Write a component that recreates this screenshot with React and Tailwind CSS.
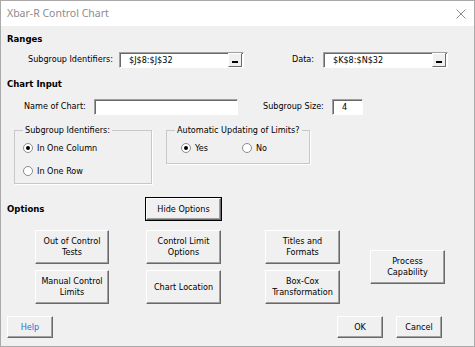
import React, { useState } from 'react';

const font = { fontFamily: '"DejaVu Sans Condensed", "DejaVu Sans", sans-serif', fontStretch: 'condensed' };

function Btn({ children, className = '', focused = false }) {
  return (
    <button
      type="button"
      className={
        'flex items-center justify-center text-center whitespace-nowrap leading-[11px] text-[9px] text-black bg-[#f0f0f0] border border-t-white border-l-white border-r-[#696969] border-b-[#696969] shadow-[inset_-1px_-1px_0_#a0a0a0] ' +
        (focused ? 'outline outline-1 outline-black ' : '') +
        className
      }
    >
      {children}
    </button>
  );
}

function Field({ value = '', className = '', refEdit = false }) {
  return (
    <div className={'flex items-center bg-white border border-t-[#a0a0a0] border-l-[#a0a0a0] border-r-white border-b-white shadow-[inset_1px_1px_0_#696969] ' + className}>
      <span className="flex-1 pl-[9px] text-[9px] leading-[12px] text-black whitespace-nowrap">{value}</span>
      {refEdit && (
        <span className="w-[14px] h-[14px] mr-[1px] flex items-end justify-center pb-[3px] bg-[#f0f0f0] border border-t-white border-l-white border-r-[#696969] border-b-[#696969]">
          <span className="block w-[6px] h-[2px] bg-black" />
        </span>
      )}
    </div>
  );
}

function Radio({ checked, label, onClick }) {
  return (
    <div className="flex items-center h-[14px] cursor-default whitespace-nowrap" onClick={onClick}>
      <svg width="10" height="10" viewBox="0 0 10 10">
        <circle cx="5" cy="5" r="4.5" fill="#fff" stroke="#8a8a8a" />
        {checked && <circle cx="5" cy="5" r="2" fill="#000" />}
      </svg>
      <span className="ml-[4px] text-[9px] leading-[12px]">{label}</span>
    </div>
  );
}

export default function App() {
  const [ident, setIdent] = useState('col');
  const [auto, setAuto] = useState('yes');

  return (
    <div style={font} className="w-[475px] h-[347px] flex flex-col bg-[#f0f0f0] border border-[#aaaaaa] text-black text-[9px] overflow-hidden">
      <div className="h-[25px] bg-white flex items-center justify-between pl-[6px] pr-[8px] shrink-0">
        <span style={{ fontFamily: '"Noto Sans", sans-serif', fontStretch: 'normal' }} className="text-[10.5px] text-[#8c8c8c]">Xbar-R Control Chart</span>
        <svg width="10" height="10" viewBox="0 0 10 10">
          <path d="M0.5 0.5L9.5 9.5M9.5 0.5L0.5 9.5" stroke="#8c8c8c" strokeWidth="1" />
        </svg>
      </div>

      <div className="flex flex-col pl-[6px]">
        <div className="mt-[6px] h-[14px] text-[9.5px] font-bold leading-[14px]">Ranges</div>

        <div className="mt-[6px] flex items-center h-[16px]">
          <span className="ml-[21px] w-[91px] whitespace-nowrap">Subgroup Identifiers:</span>
          <Field value="$J$8:$J$32" refEdit className="w-[125px] h-[16px]" />
          <span className="ml-[48px] w-[31px]">Data:</span>
          <Field value="$K$8:$N$32" refEdit className="w-[125px] h-[16px]" />
        </div>

        <div className="mt-[9px] h-[14px] text-[9.5px] font-bold leading-[14px]">Chart Input</div>

        <div className="mt-[8px] flex items-center h-[16px]">
          <span className="ml-[17px] w-[70px] whitespace-nowrap">Name of Chart:</span>
          <Field className="w-[144px] h-[16px]" />
          <span className="ml-[25px] w-[69px] whitespace-nowrap">Subgroup Size:</span>
          <Field value="4" className="w-[31px] h-[16px]" />
        </div>

        <div className="mt-[8px] flex items-start">
          <fieldset className="ml-[7px] w-[138px] h-[61px] border border-[#c8c8c8] shadow-[1px_1px_0_#fff]">
            <legend className="ml-[8px] px-[2px] text-[9px] leading-[14px] whitespace-nowrap">Subgroup Identifiers:</legend>
            <div className="pl-[8px] pt-[4px] flex flex-col gap-[9px]">
              <Radio checked={ident === 'col'} label="In One Column" onClick={() => setIdent('col')} />
              <Radio checked={ident === 'row'} label="In One Row" onClick={() => setIdent('row')} />
            </div>
          </fieldset>
          <fieldset className="ml-[14px] w-[144px] h-[41px] border border-[#c8c8c8] shadow-[1px_1px_0_#fff]">
            <legend className="ml-[8px] px-[2px] text-[9px] leading-[14px] whitespace-nowrap">Automatic Updating of Limits?</legend>
            <div className="pl-[14px] pt-[4px] flex items-center">
              <Radio checked={auto === 'yes'} label="Yes" onClick={() => setAuto('yes')} />
              <div className="ml-[34px]">
                <Radio checked={auto === 'no'} label="No" onClick={() => setAuto('no')} />
              </div>
            </div>
          </fieldset>
        </div>

        <div className="mt-[14px] flex items-center h-[22px]">
          <span className="w-[139px] text-[9.5px] font-bold">Options</span>
          <Btn focused className="w-[75px] h-[22px]">Hide Options</Btn>
        </div>

        <div className="mt-[10px] flex items-center">
          <div className="ml-[28px] flex flex-col gap-[6px]">
            <Btn className="w-[74px] h-[34px]">Out of Control<br />Tests</Btn>
            <Btn className="w-[74px] h-[34px]">Manual Control<br />Limits</Btn>
          </div>
          <div className="ml-[37px] flex flex-col gap-[6px]">
            <Btn className="w-[75px] h-[34px]">Control Limit<br />Options</Btn>
            <Btn className="w-[75px] h-[34px]">Chart Location</Btn>
          </div>
          <div className="ml-[44px] flex flex-col gap-[6px]">
            <Btn className="w-[75px] h-[34px]">Titles and<br />Formats</Btn>
            <Btn className="w-[75px] h-[34px]">Box-Cox<br />Transformation</Btn>
          </div>
          <div className="ml-[30px]">
            <Btn className="w-[75px] h-[34px]">Process<br />Capability</Btn>
          </div>
        </div>

        <div className="mt-[12px] flex items-center h-[22px]">
          <Btn className="w-[46px] h-[22px]"><span className="text-[#1f6fd6]">Help</span></Btn>
          <Btn className="ml-[284px] w-[46px] h-[22px]">OK</Btn>
          <Btn className="ml-[13px] w-[46px] h-[22px]">Cancel</Btn>
        </div>
      </div>
    </div>
  );
}
